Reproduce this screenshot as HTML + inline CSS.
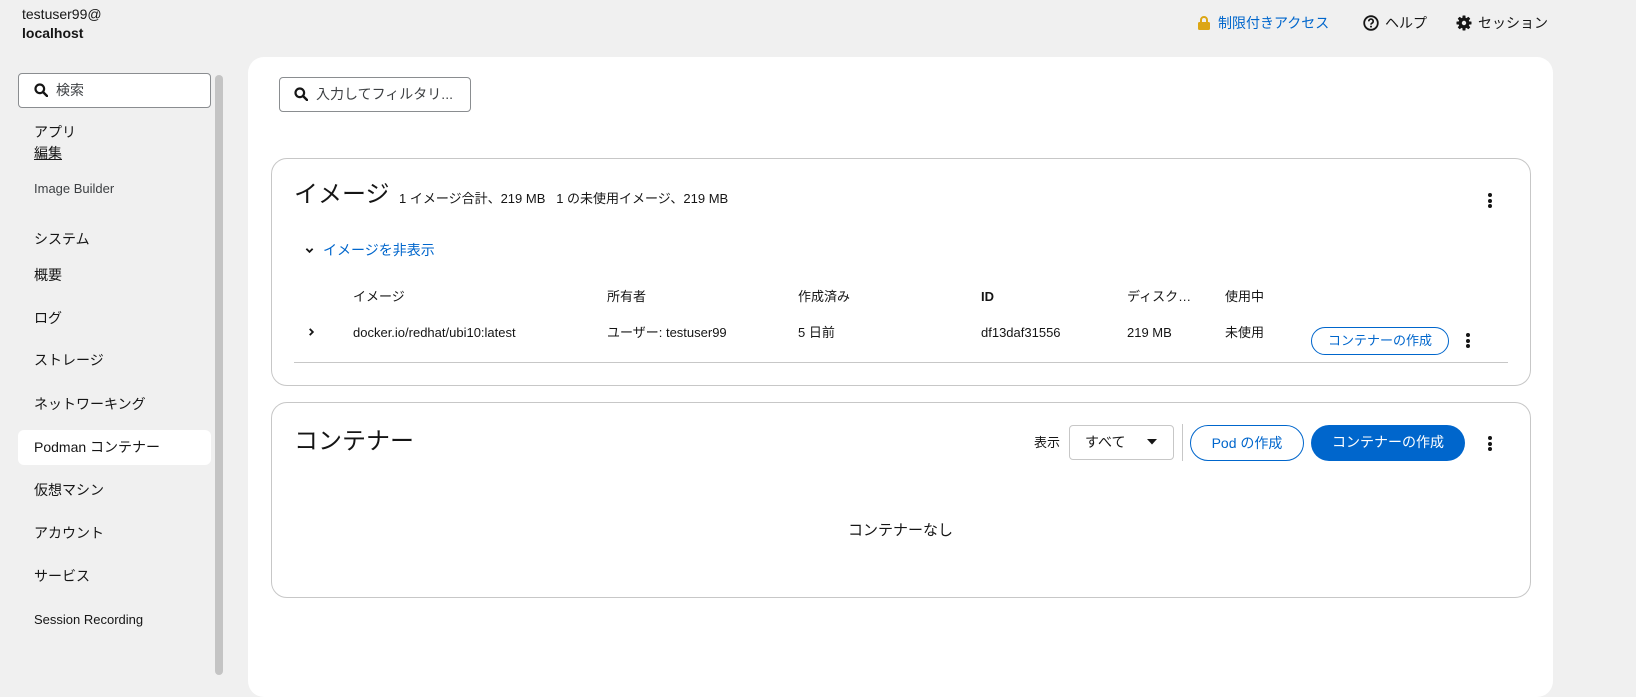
<!DOCTYPE html>
<html><head><meta charset="utf-8">
<style>
*{box-sizing:border-box;margin:0;padding:0}
body{width:1636px;height:673px;overflow:hidden;background:#f0f0f0;font-family:"Liberation Sans","Noto Sans CJK JP",sans-serif;color:#151515;font-size:14px;position:relative}
.a{position:absolute;white-space:nowrap;line-height:20px}
.nav{font-size:14px;color:#151515}
.card{position:absolute;background:#fff;border:1px solid #c7c7c7;border-radius:16px}
.btn{position:absolute;border-radius:20px;font-size:14px;text-align:center;line-height:34px;height:36px}
.kebab{position:absolute;width:4px}
.kebab i{display:block;width:4px;height:4px;border-radius:2px;background:#151515;margin-bottom:1.5px}
</style></head><body>
<div class="a" style="left:22px;top:4px;font-size:14px">testuser99@</div>
<div class="a" style="left:22px;top:23px;font-size:14px;font-weight:bold">localhost</div>

<svg class="a" style="left:1198px;top:16px" width="12" height="14" viewBox="0 0 12 14"><path d="M3 6V4a3 3 0 0 1 6 0v2" fill="none" stroke="#dca614" stroke-width="2"/><rect x="0" y="6" width="12" height="8" rx="1.5" fill="#dca614"/></svg>
<div class="a" style="left:1218px;top:13px;color:#0066cc">制限付きアクセス</div>
<svg class="a" style="left:1363px;top:15px" width="16" height="16" viewBox="0 0 16 16"><circle cx="8" cy="8" r="6.8" fill="none" stroke="#151515" stroke-width="1.8"/><path d="M5.8 6.3a2.2 2.2 0 1 1 3 2c-.6.3-.8.6-.8 1.3" fill="none" stroke="#151515" stroke-width="1.7"/><circle cx="8" cy="11.6" r="1" fill="#151515"/></svg>
<div class="a" style="left:1385px;top:13px">ヘルプ</div>
<svg class="a" style="left:1456px;top:15px" width="16" height="16" viewBox="0 0 16 16"><g fill="#151515"><circle cx="8" cy="8" r="5.5"/><rect x="6.5" y="0.5" width="3" height="15" rx="0.5"/><rect x="6.5" y="0.5" width="3" height="15" rx="0.5" transform="rotate(45 8 8)"/><rect x="6.5" y="0.5" width="3" height="15" rx="0.5" transform="rotate(90 8 8)"/><rect x="6.5" y="0.5" width="3" height="15" rx="0.5" transform="rotate(135 8 8)"/></g><circle cx="8" cy="8" r="2.2" fill="#f0f0f0"/></svg>
<div class="a" style="left:1478px;top:13px">セッション</div>

<div class="a" style="left:18px;top:73px;width:193px;height:35px;background:#fff;border:1px solid #8a8d90;border-radius:4px"></div>
<svg class="a" style="left:34px;top:83px" width="14" height="14" viewBox="0 0 14 14"><circle cx="5.8" cy="5.8" r="4.3" fill="none" stroke="#151515" stroke-width="2.2"/><path d="M9 9l4 4" stroke="#151515" stroke-width="2.4" stroke-linecap="round"/></svg>
<div class="a" style="left:56px;top:80px;color:#3c3f42">検索</div>
<div class="a" style="left:215px;top:75px;width:8px;height:600px;background:#c4c4c4;border-radius:4px"></div>
<div class="a nav" style="left:34px;top:122px">アプリ</div>
<div class="a nav" style="left:34px;top:143px;text-decoration:underline">編集</div>
<div class="a nav" style="left:34px;top:179px;font-size:13px;color:#3c3f42">Image Builder</div>
<div class="a nav" style="left:34px;top:229px">システム</div>
<div class="a nav" style="left:34px;top:265px">概要</div>
<div class="a nav" style="left:34px;top:308px">ログ</div>
<div class="a nav" style="left:34px;top:350px">ストレージ</div>
<div class="a nav" style="left:34px;top:394px">ネットワーキング</div>
<div class="a" style="left:18px;top:430px;width:193px;height:35px;background:#fff;border-radius:6px"></div>
<div class="a nav" style="left:34px;top:437px">Podman コンテナー</div>
<div class="a nav" style="left:34px;top:480px">仮想マシン</div>
<div class="a nav" style="left:34px;top:523px">アカウント</div>
<div class="a nav" style="left:34px;top:566px">サービス</div>
<div class="a nav" style="left:34px;top:610px;font-size:13px">Session Recording</div>

<div class="a" style="left:248px;top:57px;width:1305px;height:640px;background:#fff;border-radius:16px"></div>
<div class="a" style="left:279px;top:77px;width:192px;height:35px;border:1px solid #8a8d90;border-radius:4px"></div>
<svg class="a" style="left:294px;top:87px" width="14" height="14" viewBox="0 0 14 14"><circle cx="5.8" cy="5.8" r="4.3" fill="none" stroke="#151515" stroke-width="2.2"/><path d="M9 9l4 4" stroke="#151515" stroke-width="2.4" stroke-linecap="round"/></svg>
<div class="a" style="left:316px;top:84px;color:#3c3f42">入力してフィルタリ...</div>

<div class="card" style="left:271px;top:158px;width:1260px;height:228px"></div>
<div class="a" style="left:294px;top:180px;font-size:24px;line-height:30px">イメージ</div>
<div class="a" style="left:399px;top:189px;font-size:13px">1 イメージ合計、219 MB&nbsp;&nbsp;&nbsp;1 の未使用イメージ、219 MB</div>
<div class="kebab" style="left:1488px;top:193px"><i></i><i></i><i></i></div>
<svg class="a" style="left:305px;top:246px" width="9" height="9" viewBox="0 0 10 10"><path d="M1.5 3l3.5 3.5L8.5 3" fill="none" stroke="#151515" stroke-width="2"/></svg>
<div class="a" style="left:323px;top:240px;color:#0066cc;font-size:14px">イメージを非表示</div>
<div class="a" style="left:353px;top:287px;font-size:13px">イメージ</div>
<div class="a" style="left:607px;top:287px;font-size:13px">所有者</div>
<div class="a" style="left:798px;top:287px;font-size:13px">作成済み</div>
<div class="a" style="left:981px;top:287px;font-size:13px;font-weight:bold">ID</div>
<div class="a" style="left:1127px;top:287px;font-size:13px">ディスク…</div>
<div class="a" style="left:1225px;top:287px;font-size:13px">使用中</div>
<svg class="a" style="left:307px;top:327px" width="9" height="10" viewBox="0 0 10 10"><path d="M3 1.5L6.5 5 3 8.5" fill="none" stroke="#151515" stroke-width="2"/></svg>
<div class="a" style="left:353px;top:323px;font-size:13px">docker.io/redhat/ubi10:latest</div>
<div class="a" style="left:607px;top:323px;font-size:13px">ユーザー: testuser99</div>
<div class="a" style="left:798px;top:323px;font-size:13px">5 日前</div>
<div class="a" style="left:981px;top:323px;font-size:13px">df13daf31556</div>
<div class="a" style="left:1127px;top:323px;font-size:13px">219 MB</div>
<div class="a" style="left:1225px;top:323px;font-size:13px">未使用</div>
<div class="btn" style="left:1311px;top:327px;width:138px;height:28px;line-height:26px;border:1px solid #0066cc;color:#0066cc;font-size:13px">コンテナーの作成</div>
<div class="kebab" style="left:1466px;top:333px"><i></i><i></i><i></i></div>
<div class="a" style="left:294px;top:362px;width:1214px;height:1px;background:#c7c7c7"></div>

<div class="card" style="left:271px;top:402px;width:1260px;height:196px"></div>
<div class="a" style="left:294px;top:427px;font-size:24px;line-height:30px">コンテナー</div>
<div class="a" style="left:1034px;top:433px;font-size:13px">表示</div>
<div class="a" style="left:1069px;top:425px;width:105px;height:35px;border:1px solid #c7c7c7;border-radius:4px"></div>
<div class="a" style="left:1085px;top:432px;font-size:14px">すべて</div>
<svg class="a" style="left:1147px;top:439px" width="10" height="6" viewBox="0 0 10 6"><path d="M0 0h10L5 5.5z" fill="#151515"/></svg>
<div class="a" style="left:1182px;top:424px;width:1px;height:37px;background:#c7c7c7"></div>
<div class="btn" style="left:1190px;top:425px;width:114px;border:1px solid #0066cc;color:#0066cc">Pod の作成</div>
<div class="btn" style="left:1311px;top:425px;width:154px;background:#0066cc;color:#fff">コンテナーの作成</div>
<div class="kebab" style="left:1488px;top:436px"><i></i><i></i><i></i></div>
<div class="a" style="left:848px;top:521px;font-size:15px">コンテナーなし</div>
</body></html>
